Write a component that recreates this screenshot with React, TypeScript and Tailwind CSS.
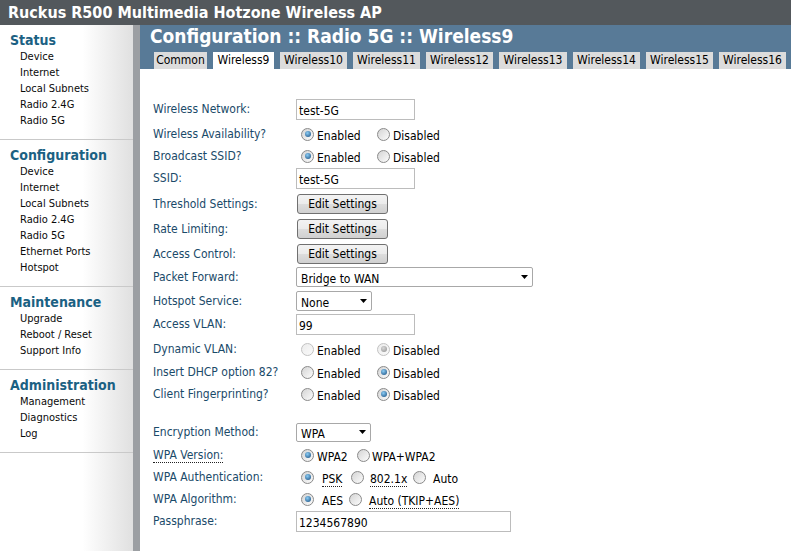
import React from "react";

function Radio({ checked = false, disabled = false }: { checked?: boolean; disabled?: boolean }) {
  return (
    <span
      className={`relative inline-block shrink-0 w-[13px] h-[13px] rounded-full border ${
        disabled
          ? "border-[#c2c2c2] bg-[linear-gradient(135deg,#ececec,#fafafa)]"
          : "border-[#8a8a8a] bg-[linear-gradient(135deg,#d4d4d4,#fcfcfc)]"
      }`}
    >
      {checked && (
        <span
          className={`absolute left-[2.5px] top-[2.5px] w-[6px] h-[6px] rounded-full ${
            disabled
              ? "bg-[radial-gradient(circle_at_40%_35%,#d8d8d8,#8e8e8e)]"
              : "bg-[radial-gradient(circle_at_40%_35%,#8ccdf5,#14497c)]"
          }`}
        />
      )}
    </span>
  );
}

function Opt({
  checked,
  disabled,
  label,
  w,
  gap,
  dotted,
}: {
  checked?: boolean;
  disabled?: boolean;
  label: string;
  w: string;
  gap: string;
  dotted?: boolean;
}) {
  return (
    <span className={`flex items-center shrink-0 whitespace-nowrap ${w}`}>
      <Radio checked={checked} disabled={disabled} />
      <span className={`pt-[3px] ${gap}`}>
        <span className={dotted ? "inline-block border-b border-dotted border-[#222] leading-[13px]" : ""}>{label}</span>
      </span>
    </span>
  );
}

function Row({
  mt,
  label,
  children,
  dotted,
}: {
  mt: string;
  label: string;
  children: React.ReactNode;
  dotted?: boolean;
}) {
  return (
    <div className={`flex items-center h-[22px] ${mt}`}>
      <div className="w-[143px] shrink-0 text-[#1a4a69] whitespace-nowrap">
        <span className={dotted ? "border-b border-dotted border-[#222] leading-[13px] inline-block" : ""}>{label}</span>
      </div>
      <div className="flex items-center">{children}</div>
    </div>
  );
}

function TextInput({ value, w }: { value: string; w: string }) {
  return (
    <div className={`h-[21px] ${w} shrink-0 border border-[#bcbcbc] bg-white pl-[2px] pt-[3px] leading-[16px] text-black`}>
      {value}
    </div>
  );
}

function Btn() {
  return (
    <div className="ml-[1px] w-[91px] h-[20px] shrink-0 rounded-[3px] border border-[#707070] bg-[linear-gradient(to_bottom,#f3f3f3_0%,#ebebeb_50%,#dddddd_51%,#d0d0d0_100%)] text-center leading-[18px] text-black">
      Edit Settings
    </div>
  );
}

function Select({ value, w, h }: { value: string; w: string; h: string }) {
  return (
    <div
      className={`${w} ${h} shrink-0 rounded-[2px] border border-[#a8a8a8] bg-white pl-[4px] pr-[4px] flex items-center justify-between text-black`}
    >
      <span className="pt-[3px]">{value}</span>
      <svg width="7" height="4" viewBox="0 0 7 4">
        <path d="M0 0h7L3.5 4z" fill="#000" />
      </svg>
    </div>
  );
}

const sections = [
  { title: "Status", items: ["Device", "Internet", "Local Subnets", "Radio 2.4G", "Radio 5G"] },
  {
    title: "Configuration",
    items: ["Device", "Internet", "Local Subnets", "Radio 2.4G", "Radio 5G", "Ethernet Ports", "Hotspot"],
  },
  { title: "Maintenance", items: ["Upgrade", "Reboot / Reset", "Support Info"] },
  { title: "Administration", items: ["Management", "Diagnostics", "Log"] },
];

const tabs = [
  { t: "Common", w: "w-[53px]" },
  { t: "Wireless9", w: "w-[61px]", active: true },
  { t: "Wireless10", w: "w-[67px]" },
  { t: "Wireless11", w: "w-[67px]" },
  { t: "Wireless12", w: "w-[67px]" },
  { t: "Wireless13", w: "w-[68px]" },
  { t: "Wireless14", w: "w-[67px]" },
  { t: "Wireless15", w: "w-[67px]" },
  { t: "Wireless16", w: "w-[67px]" },
];

function EnDis({ en, disabled }: { en: boolean; disabled?: boolean }) {
  return (
    <span className="ml-[5px] flex items-center">
      <Opt checked={en} disabled={disabled} label="Enabled" w="w-[76px]" gap="ml-[3px]" />
      <Opt checked={!en} disabled={disabled} label="Disabled" w="w-[70px]" gap="ml-[3px]" />
    </span>
  );
}

export default function App() {
  return (
    <div className="w-[791px] h-[551px] overflow-hidden bg-white font-[Tahoma,'DejaVu_Sans_Condensed','Liberation_Sans',sans-serif] text-[12px] text-black flex flex-col">
      <div className="h-[25px] shrink-0 bg-[#53585c] text-white font-bold text-[16px] leading-[25px] pl-[8px] whitespace-nowrap">
        Ruckus R500 Multimedia Hotzone Wireless AP
      </div>
      <div className="flex flex-1 min-h-0">
        <div className="w-[133px] shrink-0 bg-[linear-gradient(to_right,#ffffff_62%,#e0e0e0)]">
          {sections.map((s) => (
            <div key={s.title} className="border-b border-[#c9c9c9] pt-[6px] pb-[10px]">
              <div className="h-[18px] leading-[18px] pl-[10px] text-[14px] font-bold text-[#1b6183] whitespace-nowrap">
                {s.title}
              </div>
              {s.items.map((i) => (
                <div key={i} className="h-[16px] leading-[16px] pl-[20px] text-[11px] text-[#0a0a0a] whitespace-nowrap">
                  {i}
                </div>
              ))}
            </div>
          ))}
        </div>
        <div className="w-[7px] shrink-0 bg-[#9c9fa3]" />
        <div className="flex-1 flex flex-col min-w-0">
          <div className="h-[44px] shrink-0 bg-[#587a97] flex flex-col">
            <div className="h-[27px] pl-[10px] text-white font-bold text-[19px] leading-[22px] whitespace-nowrap">
              Configuration :: Radio 5G :: Wireless9
            </div>
            <div className="flex gap-[6px] pl-[14px] h-[17px]">
              {tabs.map((t) => (
                <div
                  key={t.t}
                  className={`${t.w} h-[17px] leading-[17px] text-center whitespace-nowrap ${
                    t.active ? "bg-white" : "bg-[#dcdcdc]"
                  }`}
                >
                  {t.t}
                </div>
              ))}
            </div>
          </div>
          <div className="pl-[13px] pt-[29px] flex flex-col">
            <Row mt="mt-0" label="Wireless Network:">
              <TextInput value="test-5G" w="w-[119px]" />
            </Row>
            <Row mt="mt-[3px]" label="Wireless Availability?">
              <EnDis en />
            </Row>
            <Row mt="mt-0" label="Broadcast SSID?">
              <EnDis en />
            </Row>
            <Row mt="mt-0" label="SSID:">
              <TextInput value="test-5G" w="w-[119px]" />
            </Row>
            <Row mt="mt-[4px]" label="Threshold Settings:">
              <Btn />
            </Row>
            <Row mt="mt-[3px]" label="Rate Limiting:">
              <Btn />
            </Row>
            <Row mt="mt-[3px]" label="Access Control:">
              <Btn />
            </Row>
            <Row mt="mt-[1px]" label="Packet Forward:">
              <Select value="Bridge to WAN" w="w-[237px]" h="h-[20px]" />
            </Row>
            <Row mt="mt-[2px]" label="Hotspot Service:">
              <Select value="None" w="w-[76px]" h="h-[20px]" />
            </Row>
            <Row mt="mt-[1px]" label="Access VLAN:">
              <TextInput value="99" w="w-[119px]" />
            </Row>
            <Row mt="mt-[3px]" label="Dynamic VLAN:">
              <EnDis en={false} disabled />
            </Row>
            <Row mt="mt-[1px]" label="Insert DHCP option 82?">
              <EnDis en={false} />
            </Row>
            <Row mt="mt-0" label="Client Fingerprinting?">
              <EnDis en={false} />
            </Row>
            <Row mt="mt-[16px]" label="Encryption Method:">
              <Select value="WPA" w="w-[75px]" h="h-[19px]" />
            </Row>
            <Row mt="mt-[1px]" label="WPA Version:" dotted>
              <span className="ml-[5px] flex items-center">
                <Opt checked label="WPA2" w="w-[56px]" gap="ml-[3px]" />
                <Opt label="WPA+WPA2" w="w-[80px]" gap="ml-[2px]" />
              </span>
            </Row>
            <Row mt="mt-0" label="WPA Authentication:">
              <span className="ml-[5px] flex items-center">
                <Opt checked label="PSK" w="w-[50px]" gap="ml-[8px]" dotted />
                <Opt label="802.1x" w="w-[62px]" gap="ml-[6px]" dotted />
                <Opt label="Auto" w="w-[50px]" gap="ml-[7px]" />
              </span>
            </Row>
            <Row mt="mt-0" label="WPA Algorithm:">
              <span className="ml-[5px] flex items-center">
                <Opt checked label="AES" w="w-[48px]" gap="ml-[8px]" />
                <Opt label="Auto (TKIP+AES)" w="w-[110px]" gap="ml-[7px]" dotted />
              </span>
            </Row>
            <Row mt="mt-0" label="Passphrase:">
              <TextInput value="1234567890" w="w-[215px]" />
            </Row>
          </div>
        </div>
      </div>
    </div>
  );
}
